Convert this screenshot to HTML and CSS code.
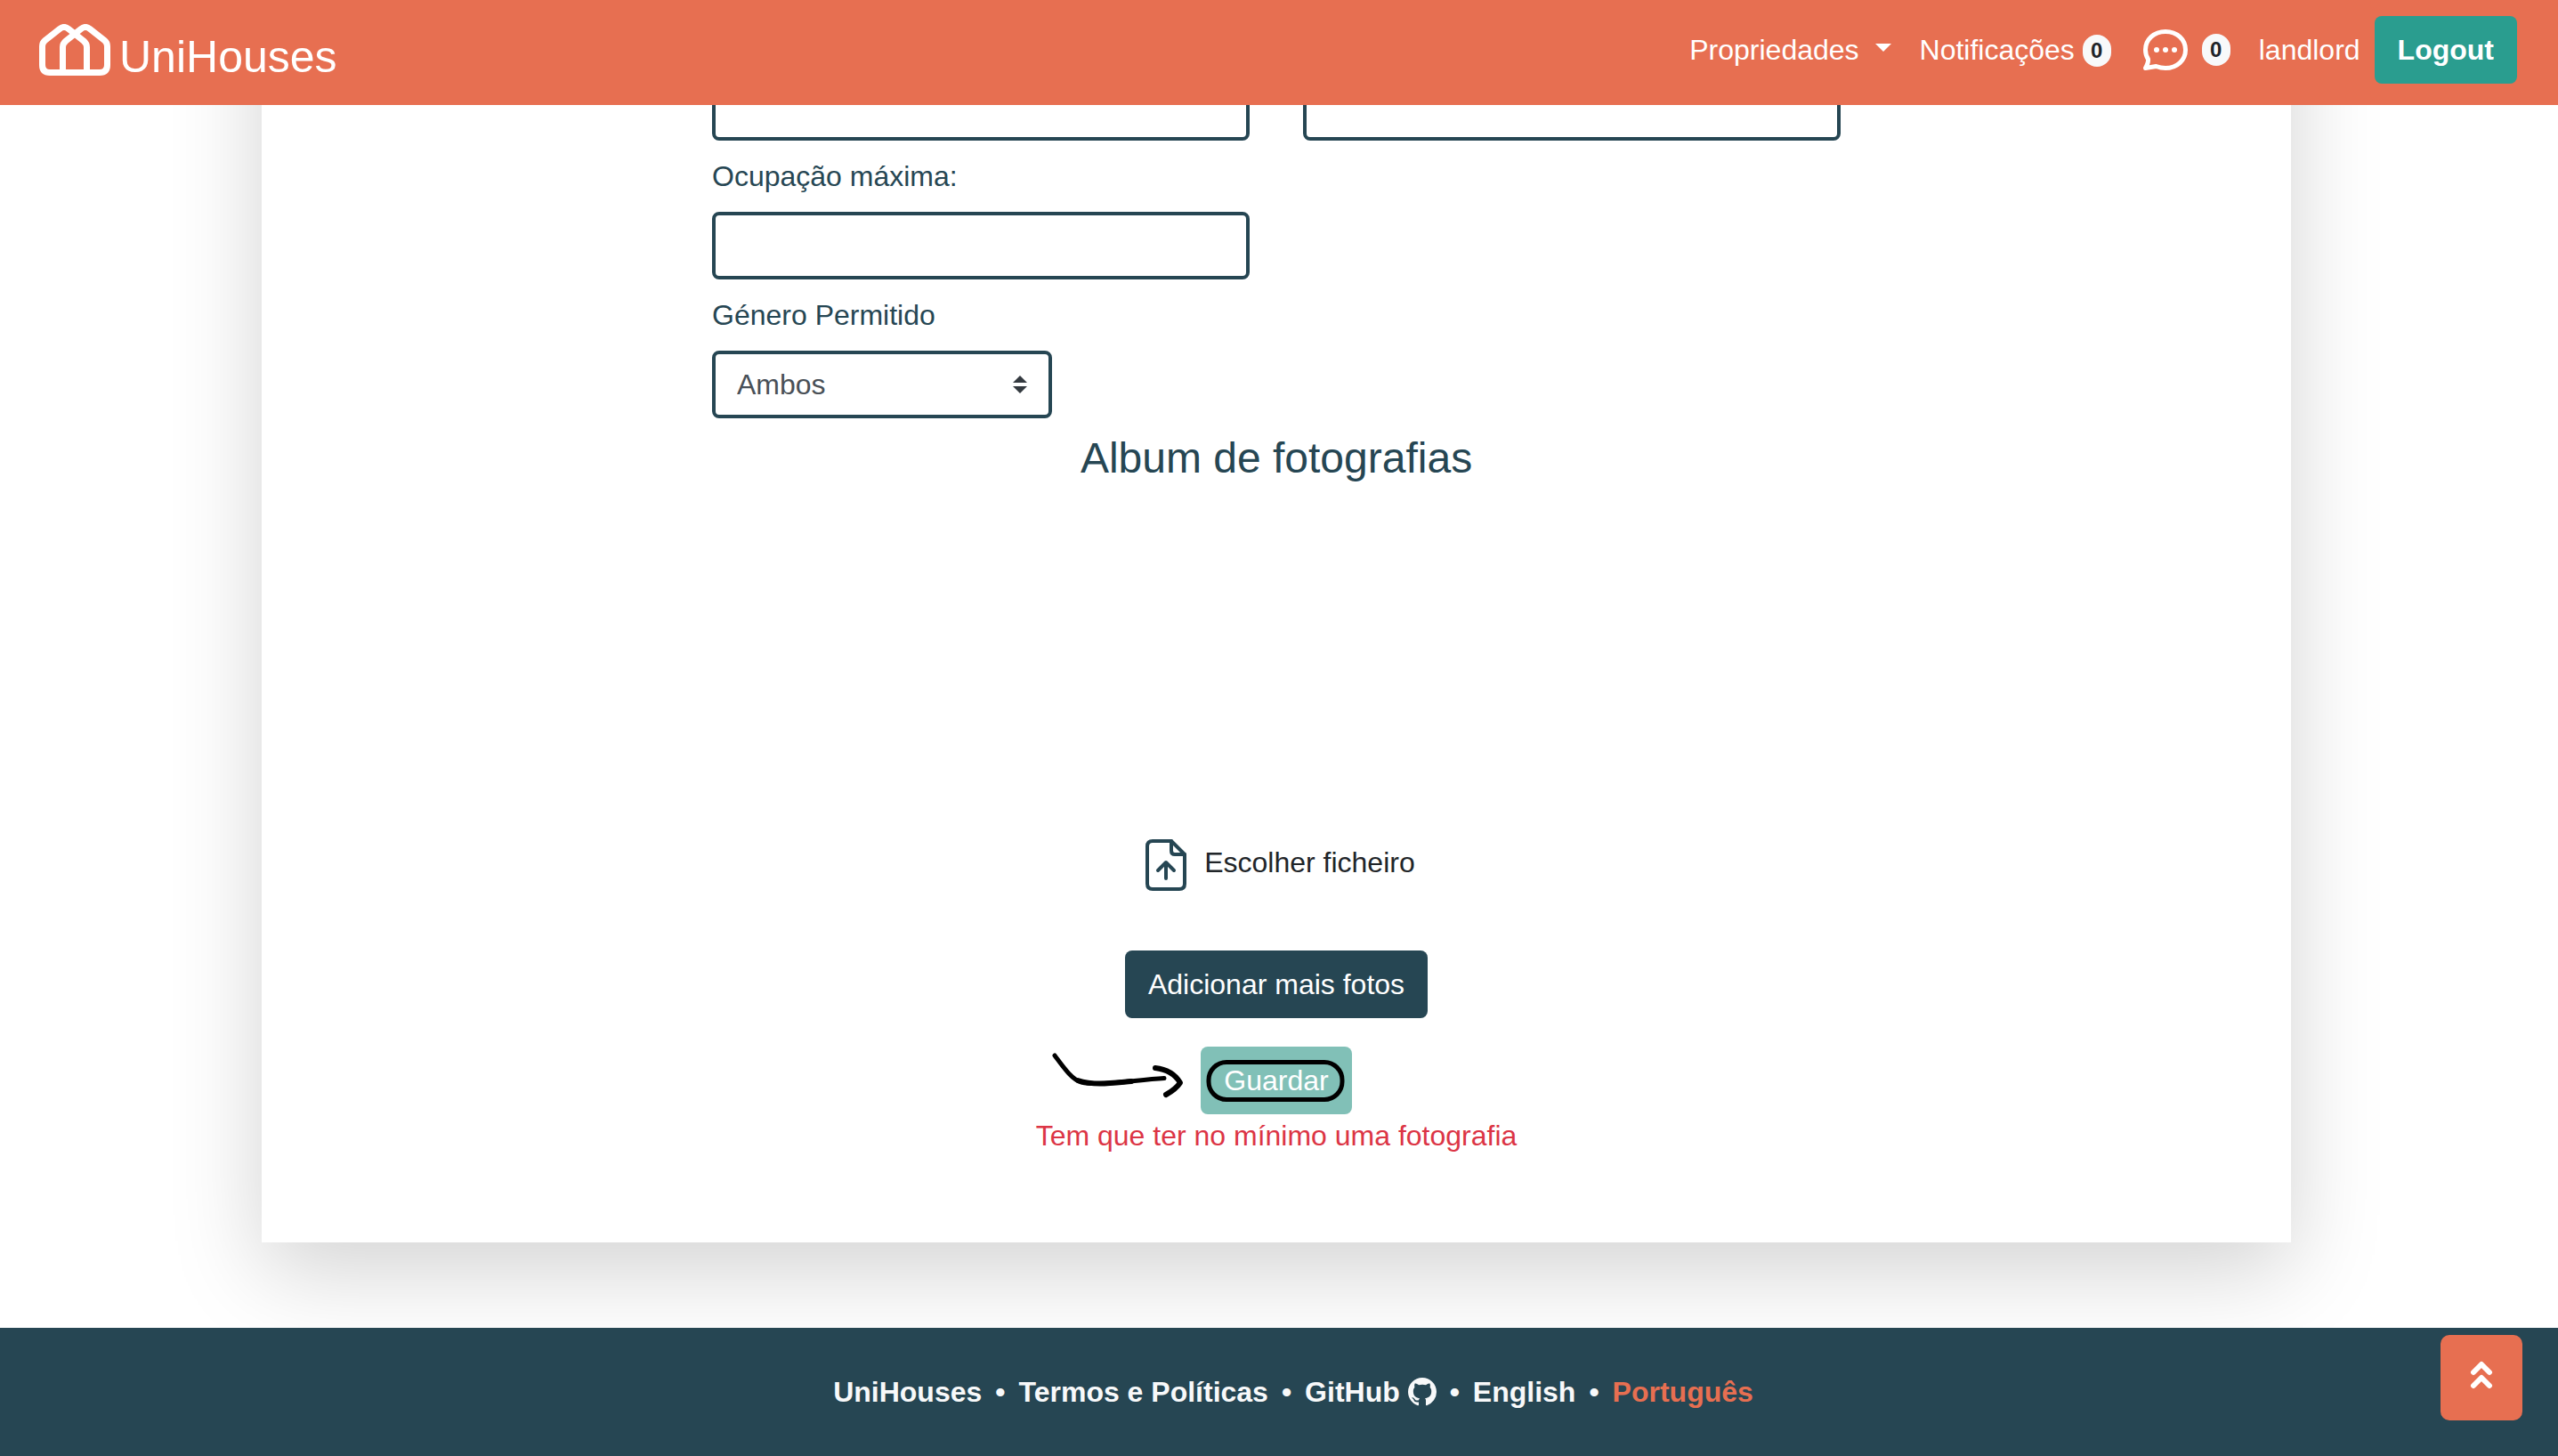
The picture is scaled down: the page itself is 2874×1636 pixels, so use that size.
FILE: index.html
```html
<!DOCTYPE html>
<html lang="pt">
<head>
  <meta charset="utf-8">
  <meta name="viewport" content="width=device-width, initial-scale=1">
  <title>UniHouses</title>
  <link rel="stylesheet" href="styles.css">
</head>
<body>
  <header class="navbar">
    <a class="brand" href="#">
      <svg class="brand-logo" viewBox="0 0 80 58" fill="none" stroke="#fff" stroke-width="7" stroke-linejoin="round" aria-hidden="true">
        <path d="M12 54.500Q3.500 54.500 3.500 46V25Q3.500 21 6.500 18.500L23 5.500Q28 1.500 33 5.500L50 19Q53.500 22 53.500 26V54"/>
        <path d="M12 54.500H68Q76.500 54.500 76.500 46V25Q76.500 21 73.500 18.500L57 5.500Q52 1.500 47 5.500L30 19Q26.500 22 26.500 26V54"/>
      </svg>
      <span>UniHouses</span>
    </a>
    <nav class="nav">
      <a class="nav-link dropdown" href="#">Propriedades</a>
      <a class="nav-link" href="#">Notificações <span class="badge">0</span></a>
      <a class="nav-link messages" href="#" aria-label="Mensagens">
        <svg class="chat-icon" viewBox="0 0 50 46" aria-hidden="true">
          <path d="M25 2.500C38 2.500 47.500 11.500 47.500 23S38 43.500 25 43.500Q19.500 43.500 14.500 41.500L2.500 43.500Q6 37 5.500 33.500Q2.500 29 2.500 23C2.500 11.500 12 2.500 25 2.500Z" fill="none" stroke="#fff" stroke-width="5" stroke-linejoin="round"/>
          <g fill="#fff"><circle cx="15" cy="23" r="3"/><circle cx="25" cy="23" r="3"/><circle cx="35" cy="23" r="3"/></g>
        </svg>
        <span class="badge">0</span>
      </a>
      <a class="nav-link" href="#">landlord</a>
      <button class="btn btn-logout" type="button">Logout</button>
    </nav>
  </header>

  <main class="page">
    <form class="card">
      <div class="fields">
        <input class="control" type="text" aria-label="Número de quartos">
        <input class="control" type="text" aria-label="Número de casas de banho">
        <div class="field">
          <label for="occupation">Ocupação máxima:</label>
          <input class="control" id="occupation" type="text">
        </div>
        <div class="field field-start">
          <label for="gender">Género Permitido</label>
          <select class="control select" id="gender">
            <option>Ambos</option>
          </select>
        </div>
      </div>

      <h4 class="album-title">Album de fotografias</h4>
      <div class="album"></div>

      <label class="file-picker">
        <input class="file-input" type="file">
        <svg class="file-icon" viewBox="0 0 64 64" fill="none" stroke="#264653" stroke-width="4" stroke-linecap="round" stroke-linejoin="round" aria-hidden="true">
          <path d="M38 5H17Q11 5 11 11V53Q11 59 17 59H47Q53 59 53 53V20Z"/>
          <path d="M38 5V16Q38 20 42 20H53"/>
          <path d="M32 47V30M23 38L32 29L41 38"/>
        </svg>
        <span>Escolher ficheiro</span>
      </label>

      <button class="btn btn-add" type="button">Adicionar mais fotos</button>
      <div class="save">
        <button class="btn btn-save" type="submit">Guardar</button>
        <svg class="save-mark" viewBox="0 0 340 76" fill="none" stroke="#000" stroke-linecap="round" stroke-linejoin="round" aria-hidden="true">
          <rect x="179" y="17.500" width="150" height="42" rx="20" stroke-width="5"/>
          <path d="M6 10C15 22 25 37 36 40C54 44.500 92 38 129 35.500" stroke-width="5"/>
          <path d="M32 38C50 44 70 41 92 39" stroke-width="6"/>
          <path d="M119 24Q138 26 147 40.500Q142 48 131 54" stroke-width="6"/>
        </svg>
      </div>
      <p class="error">Tem que ter no mínimo uma fotografia</p>
    </form>
  </main>

  <footer class="footer">
    <ul class="footer-links">
      <li><a href="#">UniHouses</a></li>
      <li>•</li>
      <li><a href="#">Termos e Políticas</a></li>
      <li>•</li>
      <li><a href="#">GitHub <svg class="github-icon" viewBox="0 0 16 16" aria-hidden="true"><path fill="currentColor" d="M8 0C3.580 0 0 3.580 0 8c0 3.540 2.290 6.530 5.470 7.590.4.070.55-.17.55-.38 0-.19-.01-.82-.01-1.490-2.010.37-2.530-.49-2.690-.94-.09-.23-.48-.94-.82-1.130-.28-.15-.68-.52-.01-.53.63-.01 1.080.58 1.230.82.72 1.210 1.870.87 2.330.66.07-.52.28-.87.51-1.070-1.780-.2-3.640-.89-3.640-3.950 0-.87.31-1.590.82-2.150-.08-.2-.36-1.020.08-2.120 0 0 .67-.21 2.200.82.64-.18 1.320-.27 2-.27s1.360.09 2 .27c1.530-1.040 2.200-.82 2.200-.82.44 1.100.16 1.920.08 2.120.51.56.82 1.270.82 2.150 0 3.070-1.870 3.750-3.650 3.950.29.25.54.73.54 1.480 0 1.070-.01 1.930-.01 2.200 0 .21.15.46.55.38A8.010 8.010 0 0 0 16 8c0-4.420-3.580-8-8-8z"/></svg></a></li>
      <li>•</li>
      <li><a href="#">English</a></li>
      <li>•</li>
      <li><a class="current" href="#">Português</a></li>
    </ul>
  </footer>

  <button class="back-to-top" type="button" aria-label="Voltar ao topo">
    <svg class="top-icon" viewBox="0 0 26 32" fill="none" stroke="#fff" stroke-width="6" stroke-linecap="round" stroke-linejoin="round" aria-hidden="true">
      <path d="M4 13L13 4L22 13M4 28L13 19L22 28"/>
    </svg>
  </button>
</body>
</html>
```

FILE: styles.css
```css
*, *::before, *::after { box-sizing: border-box; }

body {
  margin: 0;
  background: #fff;
  color: #212529;
  font: 32px/48px "Liberation Sans", Arial, sans-serif;
}

a { color: inherit; text-decoration: none; }
button, input, select { font: inherit; }

.navbar {
  position: sticky;
  top: 0;
  z-index: 2;
  display: flex;
  align-items: flex-start;
  justify-content: space-between;
  height: 118px;
  padding: 18px 46px 0 44px;
  background: #e76f51;
  color: #fff;
}

.brand {
  display: flex;
  align-items: flex-start;
  gap: 10px;
  padding-top: 9px;
  font-size: 50px;
  line-height: 74px;
}
.brand-logo { width: 80px; height: 58px; }

.nav { display: flex; align-items: center; }
.nav-link { padding: 0 16px; }
.dropdown::after {
  content: "";
  display: inline-block;
  margin-left: 18px;
  vertical-align: 9px;
  border: 9px solid transparent;
  border-top-color: #fff;
  border-bottom: 0;
}
.messages { display: flex; align-items: center; gap: 16px; padding-left: 20px; }
.chat-icon { width: 50px; height: 46px; }

.badge {
  display: inline-block;
  min-width: 32px;
  padding: 6px 9px;
  border-radius: 18px;
  background: #f8f9fa;
  color: #212529;
  font-size: 24px;
  font-weight: 700;
  line-height: 24px;
  text-align: center;
  vertical-align: 2px;
}

.btn {
  height: 76px;
  padding: 0 26px;
  border: 0;
  border-radius: 8px;
  color: #fff;
}
.btn-logout { background: #2a9d8f; font-weight: 700; }
.btn-add { background: #264653; }
.btn-save { background: #81c0b7; }

.page { padding: 0 6px 96px 0; }

.card {
  display: flex;
  flex-direction: column;
  align-items: center;
  max-width: 2280px;
  margin: -240px auto 0;
  padding: 204px 48px 96px;
  background: #fff;
  box-shadow: 0 32px 96px rgba(0, 0, 0, .175);
}

.fields {
  display: grid;
  grid-template-columns: 1fr 1fr;
  gap: 16px 60px;
  width: 100%;
  max-width: 1268px;
  color: #264653;
}
.field { display: flex; flex-direction: column; gap: 16px; }
.field-start { grid-column: 1; align-items: flex-start; }

.control {
  width: 100%;
  height: 76px;
  padding: 0 24px;
  border: 4px solid #264653;
  border-radius: 8px;
  background: #fff;
  color: #495057;
}
.select {
  width: 382px;
  appearance: none;
  background: #fff url("data:image/svg+xml,%3Csvg xmlns='http://www.w3.org/2000/svg' viewBox='0 0 4 5'%3E%3Cpath fill='%23343a40' d='M2 0L0 2h4zm0 5L0 3h4z'/%3E%3C/svg%3E") no-repeat right 24px center / 16px 20px;
}

.album-title {
  margin: 16px 0 0;
  color: #264653;
  font-size: 48px;
  font-weight: 400;
  line-height: 58px;
}
.album { min-height: 396px; }

.file-picker { margin-bottom: 64px; cursor: pointer; }
.file-input {
  position: absolute;
  width: 1px;
  height: 1px;
  opacity: 0;
}
.file-icon { width: 64px; height: 64px; margin-right: 2px; vertical-align: middle; }

.save { position: relative; margin-top: 32px; }
.btn-save { display: block; }
.save-mark {
  position: absolute;
  top: 0;
  right: 0;
  width: 340px;
  height: 76px;
  pointer-events: none;
}

.error { margin: 0; color: #dc3545; }

.footer {
  position: relative;
  padding: 48px 0;
  background: #264653;
  color: #f8f9fa;
  font-weight: 700;
}
.footer-links {
  display: flex;
  justify-content: center;
  gap: 15px;
  margin: 0;
  padding: 0 0 0 32px;
  list-style: none;
}
.github-icon { width: 32px; height: 32px; vertical-align: -5px; }
.current { color: #e76f51; }

.back-to-top {
  position: fixed;
  right: 40px;
  bottom: 40px;
  z-index: 3;
  display: grid;
  place-items: center;
  width: 92px;
  height: 96px;
  padding: 0 0 6px;
  border: 0;
  border-radius: 10px;
  background: #e76f51;
}
.top-icon { width: 26px; height: 32px; }
```
